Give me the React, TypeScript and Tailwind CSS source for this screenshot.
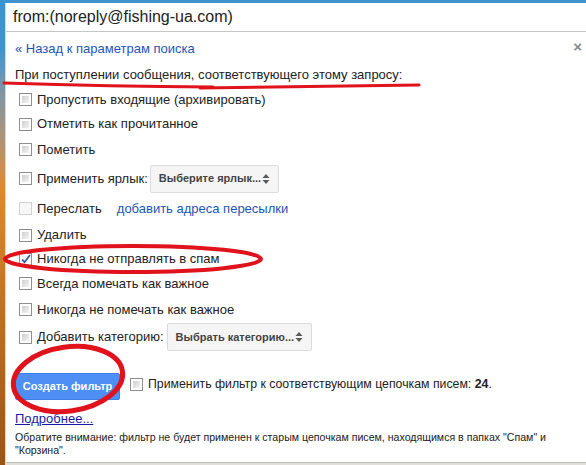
import React from "react";

// --- Small pieces ---
const Checkbox = ({
  checked = false,
  disabled = false,
}: {
  checked?: boolean;
  disabled?: boolean;
}) => (
  <span
    className={`relative block w-[13px] h-[13px] shrink-0 border ${
      disabled ? "border-[#d2d2d2] bg-[#f7f7f7]" : "border-[#8e8f8f] bg-white"
    }`}
  >
    {!disabled && (
      <span
        className={`absolute inset-[2px] bg-linear-to-br ${
          checked ? "from-[#e4e9f2] to-[#fbfcfe]" : "from-[#cfcfcf] to-[#f4f4f4]"
        }`}
      />
    )}
    {checked && (
      <svg className="absolute -left-[1px] -top-[2px]" width="14" height="14" viewBox="0 0 14 14">
        <path d="M3 7.5 L5.6 10.2 L11 3" fill="none" stroke="#3d5a9c" strokeWidth="1.8" />
      </svg>
    )}
  </span>
);

const UpDown = () => (
  <svg width="8" height="12" viewBox="0 0 8 12">
    <path d="M4 1 L7.5 5 L0.5 5 Z" fill="#5a5a5a" />
    <path d="M4 11 L7.5 7 L0.5 7 Z" fill="#5a5a5a" />
  </svg>
);

const Select = ({ label, width }: { label: string; width: string }) => (
  <div
    className={`${width} h-[28px] flex items-center justify-between pl-[8px] pr-[8px] border border-[#dcdcdc] rounded-[2px] bg-[#f5f5f5] text-[11px] font-bold text-[#444]`}
  >
    <span>{label}</span>
    <UpDown />
  </div>
);

const Row = ({
  h,
  children,
  checked,
  disabled,
}: {
  h: string;
  children: React.ReactNode;
  checked?: boolean;
  disabled?: boolean;
}) => (
  <div className={`flex items-center pl-[4px] ${h}`}>
    <Checkbox checked={checked} disabled={disabled} />
    <div className="flex items-center pl-[5px] text-[13px] text-[#222]">{children}</div>
  </div>
);

// --- Red marker annotations drawn over the screenshot ---
const Annotations = () => (
  <svg
    className="absolute inset-0 pointer-events-none"
    width="586"
    height="465"
    viewBox="0 0 586 465"
  >
    <g fill="none" stroke="#e0121c" strokeLinecap="round">
      <path d="M4 83 Q110 86.5 213 87" strokeWidth="3" />
      <path d="M200 88 Q320 86.5 419 85" strokeWidth="3" />
      <ellipse cx="133" cy="259" rx="128" ry="13" strokeWidth="4" />
      <ellipse cx="68" cy="379" rx="55" ry="32" strokeWidth="5" transform="rotate(-8 68 379)" />
    </g>
  </svg>
);

// --- Page ---
export default function App() {
  return (
    <div className="relative w-[586px] h-[465px] overflow-hidden flex flex-col bg-[#3f93cc] font-['Liberation_Sans',Arial,sans-serif]">
      <div className="h-[3px] shrink-0" />
      <div className="flex flex-1 min-h-0">
        <div className="w-[5px] shrink-0 bg-linear-to-b from-[#3f93cc] from-10% via-[#dc8a2a] via-40% to-[#9a5418]" />
        <div className="flex-1 flex flex-col bg-white border-l border-[#d8d8d8]">
          {/* search field */}
          <div className="h-[29px] shrink-0 flex items-center pl-[7px] border-b border-[#c6c6c6] text-[16px] text-[#222]">
            from:(noreply@fishing-ua.com)
          </div>

          {/* filter panel */}
          <div className="flex-1 flex flex-col pl-[9px] pr-[4px] pt-[9px] border-b border-[#bdbdbd]">
            <div className="h-[16px] flex items-center justify-between">
              <span className="text-[13px] text-[#1c56b8]">« Назад к параметрам поиска</span>
              <span className="text-[15px] font-bold text-[#8a8a8a] -mt-[6px] leading-none">×</span>
            </div>
            <div className="h-[16px] mt-[10px] flex items-center text-[13px] text-[#222]">
              При поступлении сообщения, соответствующего этому запросу:
            </div>

            <div className="flex flex-col mt-[4px]">
              <Row h="h-[25px]">Пропустить входящие (архивировать)</Row>
              <Row h="h-[24px]">Отметить как прочитанное</Row>
              <Row h="h-[27px]">Пометить</Row>
              <Row h="h-[31px]">
                <span>Применить ярлык:</span>
                <span className="ml-[2px]">
                  <Select label="Выберите ярлык..." width="w-[129px]" />
                </span>
              </Row>
              <Row h="h-[29px]" disabled>
                <span>Переслать</span>
                <span className="ml-[15px] text-[#1c56b8]">добавить адреса пересылки</span>
              </Row>
              <Row h="h-[24px]">Удалить</Row>
              <Row h="h-[24px]" checked>
                Никогда не отправлять в спам
              </Row>
              <Row h="h-[25px]">Всегда помечать как важное</Row>
              <Row h="h-[27px]">Никогда не помечать как важное</Row>
              <Row h="h-[28px]">
                <span>Добавить категорию:</span>
                <span className="ml-[3px]">
                  <Select label="Выбрать категорию..." width="w-[145px]" />
                </span>
              </Row>
            </div>

            <div className="flex items-center mt-[22px]">
              <button className="w-[105px] h-[27px] rounded-[2px] bg-[#4d8ff4] border border-[#3f7fe6] text-white text-[11px] font-bold">
                Создать фильтр
              </button>
              <div className="flex items-center ml-[10px] -mt-[5px]">
                <Checkbox />
                <span className="ml-[5px] text-[12.3px] text-[#222]">
                  Применить фильтр к соответствующим цепочкам писем: <b>24</b>.
                </span>
              </div>
            </div>

            <div className="mt-[11px] h-[16px] flex items-center">
              <span className="text-[13px] text-[#1a1aa6] underline">Подробнее...</span>
            </div>
            <p className="mt-[4px] pr-[2px] text-[10.6px] leading-[13px] text-[#222]">
              Обратите внимание: фильтр не будет применен к старым цепочкам писем, находящимся в папках "Спам" и
              "Корзина".
            </p>
          </div>
          <div className="h-[2px] shrink-0 bg-[#e2dfda]" />
        </div>
      </div>
      <Annotations />
    </div>
  );
}
